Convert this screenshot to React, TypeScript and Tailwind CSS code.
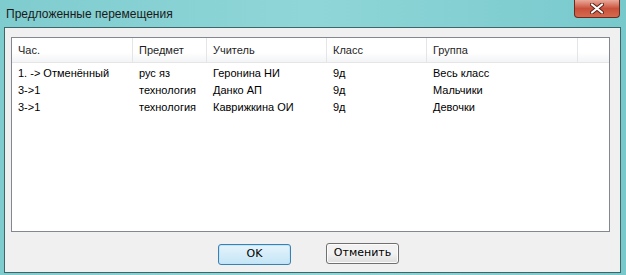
const columns = [
  { name: 'Час.', width: 'w-[121px]' },
  { name: 'Предмет', width: 'w-[74px]' },
  { name: 'Учитель', width: 'w-[120px]' },
  { name: 'Класс', width: 'w-[100px]' },
  { name: 'Группа', width: 'w-[151px]' },
];

const rows = [
  ['1. -> Отменённый', 'рус яз', 'Геронина НИ', '9д', 'Весь класс'],
  ['3->1', 'технология', 'Данко АП', '9д', 'Мальчики'],
  ['3->1', 'технология', 'Каврижкина ОИ', '9д', 'Девочки'],
];

export default function App() {
  return (
    <div
      className="w-[626px] h-[275px] flex flex-col overflow-hidden bg-gradient-to-r from-[#7fcccf] via-[#8fd6d8] to-[#78c9cc]"
      style={{ fontFamily: 'Tahoma, "DejaVu Sans", "Liberation Sans", sans-serif' }}
    >
      {/* title bar */}
      <div className="relative h-[27px] flex items-center pl-[6px] shrink-0">
        <span
          className="text-[12px] text-[#1a1a1a]"
          style={{ fontFamily: '"Segoe UI", "Liberation Sans", sans-serif' }}
        >
          Предложенные перемещения
        </span>
        <div className="absolute right-[6px] top-0 w-[46px] h-[18px] rounded-b-[4px] border border-t-0 border-[#6b2a20] bg-gradient-to-b from-[#e9a99a] via-[#c9503a] to-[#d46a4f] flex items-center justify-center">
          <svg width="14" height="11" viewBox="0 0 14 11">
            <path d="M2 1.5 L12 9.5 M12 1.5 L2 9.5" stroke="#5a2018" strokeWidth="4" strokeLinecap="round" />
            <path d="M2 1.5 L12 9.5 M12 1.5 L2 9.5" stroke="#ffffff" strokeWidth="2.2" strokeLinecap="round" />
          </svg>
        </div>
      </div>

      {/* client area */}
      <div className="ml-[4px] mr-[5px] h-[246px] border border-[#3e6668] bg-[#f0f0f0] flex flex-col shrink-0">
        <div className="pl-[6px] pr-[10px] pt-[9px]">
          <div className="h-[195px] border border-[#828790] bg-white">
            <div
              className="flex h-[25px] border-b border-[#e5e5e5] bg-gradient-to-b from-white from-60% to-[#f3f4f6] text-[11px] text-[#1e1e1e]"
              style={{ fontFamily: 'Tahoma, "Liberation Sans", sans-serif' }}
            >
              {columns.map((c) => (
                <div key={c.name} className={`${c.width} h-full flex items-center pl-[6px] border-r border-[#e3e5e8]`}>
                  {c.name}
                </div>
              ))}
              <div className="flex-1" />
            </div>
            <div className="pt-[2px] text-[11px] text-black" style={{ fontFamily: 'Tahoma, "Liberation Sans", sans-serif' }}>
              {rows.map((r, i) => (
                <div key={i} className="flex h-[17px] items-center">
                  {r.map((cell, j) => (
                    <div key={j} className={`${columns[j].width} pl-[6px] whitespace-nowrap`}>
                      {cell}
                    </div>
                  ))}
                </div>
              ))}
            </div>
          </div>
        </div>

        {/* buttons */}
        <div className="flex-1 flex items-start justify-start gap-[35px] pt-[11px] pl-[213px]">
          <button className="w-[73px] h-[21px] rounded-[3px] border border-[#3c7fb1] bg-gradient-to-b from-[#e5f4fc] to-[#c4e5f6] text-[11px] text-black shadow-[inset_0_0_0_1px_#bfe6f8] mt-[1px]">
            OK
          </button>
          <button className="w-[73px] h-[21px] rounded-[3px] border border-[#707070] bg-gradient-to-b from-[#f2f2f2] from-50% to-[#dddddd] text-[11px] text-black shadow-[inset_0_0_0_1px_#fcfcfc]">
            Отменить
          </button>
        </div>
      </div>
    </div>
  );
}
